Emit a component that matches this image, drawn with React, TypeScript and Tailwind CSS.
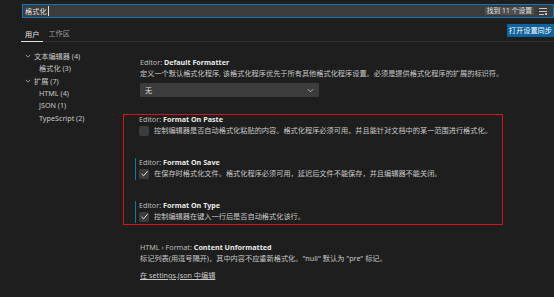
import type { ReactNode } from "react";

const treeRows = [
  { label: "文本编辑器 (4)", level: 0 },
  { label: "格式化 (3)", level: 1 },
  { label: "扩展 (7)", level: 0 },
  { label: "HTML (4)", level: 1 },
  { label: "JSON (1)", level: 1 },
  { label: "TypeScript (2)", level: 1 }
];

function Chevron({ className }: { className?: string }) {
  return (
    <svg className={className} viewBox="0 0 8 8" fill="none" stroke="currentColor" strokeWidth="1">
      <path d="M1 2.5 L4 5.5 L7 2.5" />
    </svg>
  );
}

function Checkbox({ checked }: { checked: boolean }) {
  return (
    <span className="grid h-[10px] w-[10px] shrink-0 place-items-center rounded-[2px] bg-[#3c3c3c]">
      {checked && (
        <svg className="h-[9px] w-[9px]" viewBox="0 0 10 10" fill="none" stroke="#e8e8e8" strokeWidth="1.1">
          <path d="M1.8 5.4 L4 7.6 L8.4 2.4" />
        </svg>
      )}
    </span>
  );
}

function Title({ scope, name }: { scope: string; name: string }) {
  return (
    <div className="h-[9px] whitespace-nowrap leading-[9px]">
      <span className="text-[#bdbdbd]">{scope}</span>
      <span className="font-bold text-[#e8e8e8]">{name}</span>
    </div>
  );
}

function BoolSetting({ name, text, checked, modified }: { name: string; text: string; checked: boolean; modified?: boolean }) {
  return (
    <div className={`border-l-[1.5px] pb-[1px] pl-[3.5px] ${modified ? "border-[#0c7d9d]" : "border-transparent"}`}>
      <Title scope="Editor: " name={name} />
      <div className="mt-[1px] flex h-[11px] items-center gap-[5px]">
        <Checkbox checked={checked} />
        <span className="whitespace-nowrap leading-[11px]">{text}</span>
      </div>
    </div>
  );
}

function Block({ children }: { children: ReactNode }) {
  return <div className="ml-[17px]">{children}</div>;
}

export default function App() {
  return (
    <div className="h-[297px] w-[554px] overflow-hidden bg-[#1e1e1e] font-['Noto_Sans','Noto_Sans_CJK_SC',sans-serif] text-[7.2px] text-[#c8c8c8]">
      {/* search */}
      <div className="pl-[22px] pt-[4px]">
        <div className="flex h-[14px] items-center border border-[#1177bb] bg-[#3c3c3c] pl-[2px] pr-[6px]">
          <span className="leading-[10px] text-[#e0e0e0]">格式化</span>
          <span className="ml-[1px] h-[10px] w-px bg-[#e0e0e0]" />
          <span className="ml-auto bg-[#4e4e4e] px-[2px] text-[6.8px] leading-[8px] text-[#e0e0e0]">找到 11 个设置</span>
          <svg className="ml-[5px] h-[7px] w-[8px]" viewBox="0 0 8 7" fill="#c5c5c5">
            <rect x="0" y="0" width="8" height="1" />
            <rect x="0" y="3" width="8" height="1" />
            <rect x="0" y="6" width="5" height="1" />
            <rect x="6" y="5" width="2" height="2" />
          </svg>
        </div>
      </div>

      {/* tabs */}
      <div className="ml-[21px] flex h-[24px] items-end border-b border-[#2e2e2e]">
        <div className="mb-[-1px] border-b-[1.5px] border-[#e0e0e0] px-[4px] pb-[3.5px] leading-[8px] text-[#e7e7e7]">用户</div>
        <div className="ml-[5px] pb-[4px] leading-[8px] text-[#9d9d9d]">工作区</div>
        <div className="ml-auto mb-auto mt-[6px] flex h-[13px] items-center bg-[#0e639c] px-[2px] text-[#ffffff]">打开设置同步</div>
      </div>

      <div className="flex">
        {/* tree */}
        <div className="w-[123px] shrink-0 pt-[8px]">
          {treeRows.map((row) => (
            <div
              key={row.label}
              className={`flex h-[12.4px] items-center whitespace-nowrap ${row.level === 0 ? "pl-[25px]" : "pl-[39px]"}`}
            >
              {row.level === 0 && <Chevron className="mr-[3px] h-[6px] w-[6px] text-[#c5c5c5]" />}
              <span>{row.label}</span>
            </div>
          ))}
        </div>

        {/* settings */}
        <div className="flex flex-1 flex-col pt-[16px]">
          <Block>
            <Title scope="Editor: " name="Default Formatter" />
            <div className="mt-[0.5px] whitespace-nowrap leading-[10px]">
              定义一个默认格式化程序, 该格式化程序优先于所有其他格式化程序设置。必须是提供格式化程序的扩展的标识符。
            </div>
            <div className="mt-[5.5px] flex h-[14px] w-[179px] items-center justify-between bg-[#3c3c3c] pl-[5px] pr-[5px] text-[#e0e0e0]">
              <span>无</span>
              <Chevron className="h-[7px] w-[7px] text-[#c5c5c5]" />
            </div>
          </Block>

          <div className="mt-[17px] flex w-[380px] flex-col gap-[21px] border-[1.5px] border-[#d3141c] pb-[0.5px] pl-[10.5px]">
            <BoolSetting
              name="Format On Paste"
              checked={false}
              text="控制编辑器是否自动格式化粘贴的内容。格式化程序必须可用，并且能针对文档中的某一范围进行格式化。"
            />
            <BoolSetting
              modified
              name="Format On Save"
              checked
              text="在保存时格式化文件。格式化程序必须可用，延迟后文件不能保存，并且编辑器不能关闭。"
            />
            <BoolSetting modified name="Format On Type" checked text="控制编辑器在键入一行后是否自动格式化该行。" />
          </div>

          <div className="mt-[18.5px]">
            <Block>
              <Title scope="HTML › Format: " name="Content Unformatted" />
              <div className="mt-[1px] whitespace-nowrap leading-[10px]">
                标记列表(用逗号隔开)，其中内容不应重新格式化。"null" 默认为 "pre" 标记。
              </div>
              <div className="mt-[7px] leading-[10px]">
                <span className="text-[#c8c8c8] underline">在 settings.json 中编辑</span>
              </div>
            </Block>
          </div>
        </div>
      </div>
    </div>
  );
}
